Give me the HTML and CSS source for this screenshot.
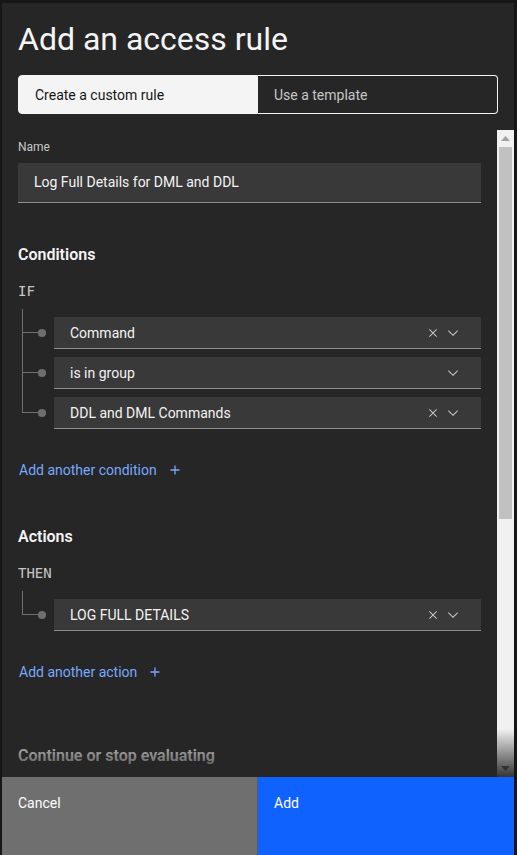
FILE: index.html
```html
<!DOCTYPE html>
<html lang="en">
<head>
<meta charset="utf-8">
<title>Add an access rule</title>
<link rel="stylesheet" href="styles.css">
</head>
<body>
<div class="page">
  <h2 class="page-title">Permissions</h2>
</div>
<div class="modal" role="dialog" aria-label="Add an access rule">
  <header class="modal-header">
    <h1 class="modal-title">Add an access rule</h1>
    <div class="switcher">
      <button class="switch switch--selected">Create a custom rule</button>
      <button class="switch">Use a template</button>
    </div>
  </header>
  <div class="modal-body">
    <div class="scroll">
      <div class="field">
        <label class="label">Name</label>
        <div class="input">Log Full Details for DML and DDL</div>
      </div>

      <h3 class="section-title">Conditions</h3>
      <div class="keyword">IF</div>
      <div class="tree">
        <div class="branch">
          <span class="dot"></span>
          <div class="select"><span class="select-text">Command</span>
            <span class="icons">
              <svg class="ico" viewBox="0 0 16 16"><path d="M12 4.7L11.3 4 8 7.3 4.7 4 4 4.7 7.3 8 4 11.3 4.7 12 8 8.7 11.3 12 12 11.3 8.7 8z"/></svg>
              <svg class="ico" viewBox="0 0 16 16"><path d="M8 11L3 6 3.7 5.3 8 9.6 12.3 5.3 13 6z"/></svg>
            </span>
          </div>
        </div>
        <div class="branch">
          <span class="dot"></span>
          <div class="select"><span class="select-text">is in group</span>
            <span class="icons">
              <svg class="ico" viewBox="0 0 16 16"><path d="M8 11L3 6 3.7 5.3 8 9.6 12.3 5.3 13 6z"/></svg>
            </span>
          </div>
        </div>
        <div class="branch branch--last">
          <span class="dot"></span>
          <div class="select"><span class="select-text">DDL and DML Commands</span>
            <span class="icons">
              <svg class="ico" viewBox="0 0 16 16"><path d="M12 4.7L11.3 4 8 7.3 4.7 4 4 4.7 7.3 8 4 11.3 4.7 12 8 8.7 11.3 12 12 11.3 8.7 8z"/></svg>
              <svg class="ico" viewBox="0 0 16 16"><path d="M8 11L3 6 3.7 5.3 8 9.6 12.3 5.3 13 6z"/></svg>
            </span>
          </div>
        </div>
      </div>
      <a class="add-link" href="#">Add another condition
        <svg class="plus" viewBox="0 0 16 16"><path d="M8 3.5v9M3.5 8h9"/></svg>
      </a>

      <h3 class="section-title section-title--actions">Actions</h3>
      <div class="keyword">THEN</div>
      <div class="tree">
        <div class="branch branch--last">
          <span class="dot"></span>
          <div class="select"><span class="select-text">LOG FULL DETAILS</span>
            <span class="icons">
              <svg class="ico" viewBox="0 0 16 16"><path d="M12 4.7L11.3 4 8 7.3 4.7 4 4 4.7 7.3 8 4 11.3 4.7 12 8 8.7 11.3 12 12 11.3 8.7 8z"/></svg>
              <svg class="ico" viewBox="0 0 16 16"><path d="M8 11L3 6 3.7 5.3 8 9.6 12.3 5.3 13 6z"/></svg>
            </span>
          </div>
        </div>
      </div>
      <a class="add-link" href="#">Add another action
        <svg class="plus" viewBox="0 0 16 16"><path d="M8 3.5v9M3.5 8h9"/></svg>
      </a>

      <h3 class="section-title section-title--continue">Continue or stop evaluating</h3>
    </div>
    <div class="scrollbar" aria-hidden="true">
      <div class="sb-btn">
        <svg class="sb-arrow" viewBox="0 0 9 5"><path d="M4.5 0L9 5H0z" fill="#a3a3a3"/></svg>
      </div>
      <div class="sb-track">
        <div class="sb-thumb"></div>
      </div>
      <div class="sb-btn">
        <svg class="sb-arrow" viewBox="0 0 9 5"><path d="M4.5 5L9 0H0z" fill="#505050"/></svg>
      </div>
    </div>
    <div class="fade"></div>
  </div>
  <footer class="modal-footer">
    <button class="btn btn--secondary">Cancel</button>
    <button class="btn btn--primary">Add</button>
  </footer>
</div>
</body>
</html>
```

FILE: styles.css
```css
* { box-sizing: border-box; }

html, body {
  margin: 0;
  height: 100%;
  overflow: hidden;
}

body {
  background: #161616;
  font-family: Roboto, "Noto Sans", sans-serif;
  color: #f4f4f4;
  position: relative;
}

.page {
  padding-left: 14px;
}

.page-title {
  margin: -17px 0 0;
  font-size: 20px;
  font-weight: 400;
  line-height: 20px;
  color: #f4f4f4;
}

.modal {
  position: absolute;
  left: 2px;
  top: 3px;
  width: 512px;
  height: 860px;
  background: #262626;
  display: flex;
  flex-direction: column;
}

.modal-header {
  padding: 16px 16px 16px;
}

.modal-title {
  margin: 0 0 16px;
  font-size: 32px;
  line-height: 40px;
  font-weight: 400;
  color: #f4f4f4;
}

.switcher {
  display: grid;
  grid-template-columns: 1fr 1fr;
  height: 39px;
}

.switch {
  font-family: inherit;
  font-size: 14px;
  text-align: left;
  padding: 0 16px;
  background: transparent;
  color: #c6c6c6;
  border: 1px solid #f4f4f4;
  border-left: none;
  border-radius: 0 4px 4px 0;
}

.switch--selected {
  background: #f4f4f4;
  color: #161616;
  border-radius: 4px 0 0 4px;
  border: 1px solid #f4f4f4;
}

.modal-body {
  position: relative;
  height: 647px;
  flex: none;
  display: flex;
}

.scroll {
  flex: 1;
  min-width: 0;
  height: 100%;
  overflow: hidden;
  padding: 9px 16px 0 16px;
}

.scrollbar {
  width: 17px;
  flex: none;
  background: #f1f1f1;
  display: flex;
  flex-direction: column;
}

.sb-btn {
  height: 17px;
  flex: none;
  display: flex;
  align-items: center;
  justify-content: center;
}

.sb-arrow {
  width: 9px;
  height: 5px;
}

.sb-track {
  flex: 1;
  padding: 0 2px;
}

.sb-thumb {
  height: 372px;
  background: #c1c1c1;
}

.field {
  display: flex;
  flex-direction: column;
}

.label {
  font-size: 12px;
  line-height: 16px;
  color: #c6c6c6;
  margin-bottom: 8px;
}

.input {
  height: 40px;
  background: #393939;
  border-bottom: 1px solid #8d8d8d;
  padding: 0 16px;
  font-size: 14px;
  line-height: 39px;
  color: #f4f4f4;
}

.section-title {
  margin: 41px 0 0;
  font-size: 16px;
  line-height: 22px;
  font-weight: 600;
  color: #f4f4f4;
}

.section-title--actions {
  margin-top: 47px;
}

.section-title--continue {
  margin-top: 64px;
}

.keyword {
  margin-top: 16px;
  font-family: "DejaVu Sans Mono", "Liberation Mono", monospace;
  font-size: 14px;
  line-height: 18px;
  color: #c6c6c6;
}

.tree {
  margin: 9px 0 0 4px;
  padding-top: 8px;
  display: flex;
  flex-direction: column;
  gap: 8px;
  border-left: 1px solid #6f6f6f;
}

.branch {
  position: relative;
  display: flex;
  align-items: center;
  padding-left: 31px;
}

.branch--last::after {
  content: "";
  position: absolute;
  left: -1px;
  top: 16px;
  bottom: -1px;
  width: 1px;
  background: #262626;
}

.branch::before {
  content: "";
  position: absolute;
  left: 0;
  top: 15px;
  width: 19px;
  height: 1px;
  background: #6f6f6f;
}

.dot {
  position: absolute;
  left: 15px;
  top: 12px;
  width: 8px;
  height: 8px;
  border-radius: 50%;
  background: #6f6f6f;
}

.select {
  flex: 1;
  height: 32px;
  background: #393939;
  border-bottom: 1px solid #8d8d8d;
  display: flex;
  align-items: center;
  padding: 0 20px 0 16px;
  font-size: 14px;
  color: #f4f4f4;
}

.select-text {
  flex: 1;
}

.icons {
  display: flex;
  gap: 4px;
}

.ico {
  width: 16px;
  height: 16px;
  fill: #c6c6c6;
}

.add-link {
  display: inline-flex;
  align-items: center;
  gap: 10px;
  margin-top: 32px;
  font-size: 14px;
  line-height: 18px;
  color: #78a9ff;
  text-decoration: none;
  padding-left: 1px;
}

.plus {
  width: 16px;
  height: 16px;
  stroke: #78a9ff;
  stroke-width: 1.3;
  fill: none;
}

.fade {
  position: absolute;
  left: 0;
  right: 0;
  bottom: 0;
  height: 48px;
  background: linear-gradient(to bottom, rgba(38, 38, 38, 0), rgba(38, 38, 38, 0.93));
  pointer-events: none;
}

.modal-footer {
  display: grid;
  grid-template-columns: 255px 1fr;
  height: 86px;
  flex: none;
}

.btn {
  font-family: inherit;
  font-size: 14px;
  line-height: 18px;
  text-align: left;
  border: none;
  padding: 17px 16px 0;
  display: flex;
  align-items: flex-start;
  color: #ffffff;
}

.btn--secondary {
  background: #6f6f6f;
}

.btn--primary {
  background: #0f62fe;
  border-left: 1px solid #5c5c5c;
}
```
